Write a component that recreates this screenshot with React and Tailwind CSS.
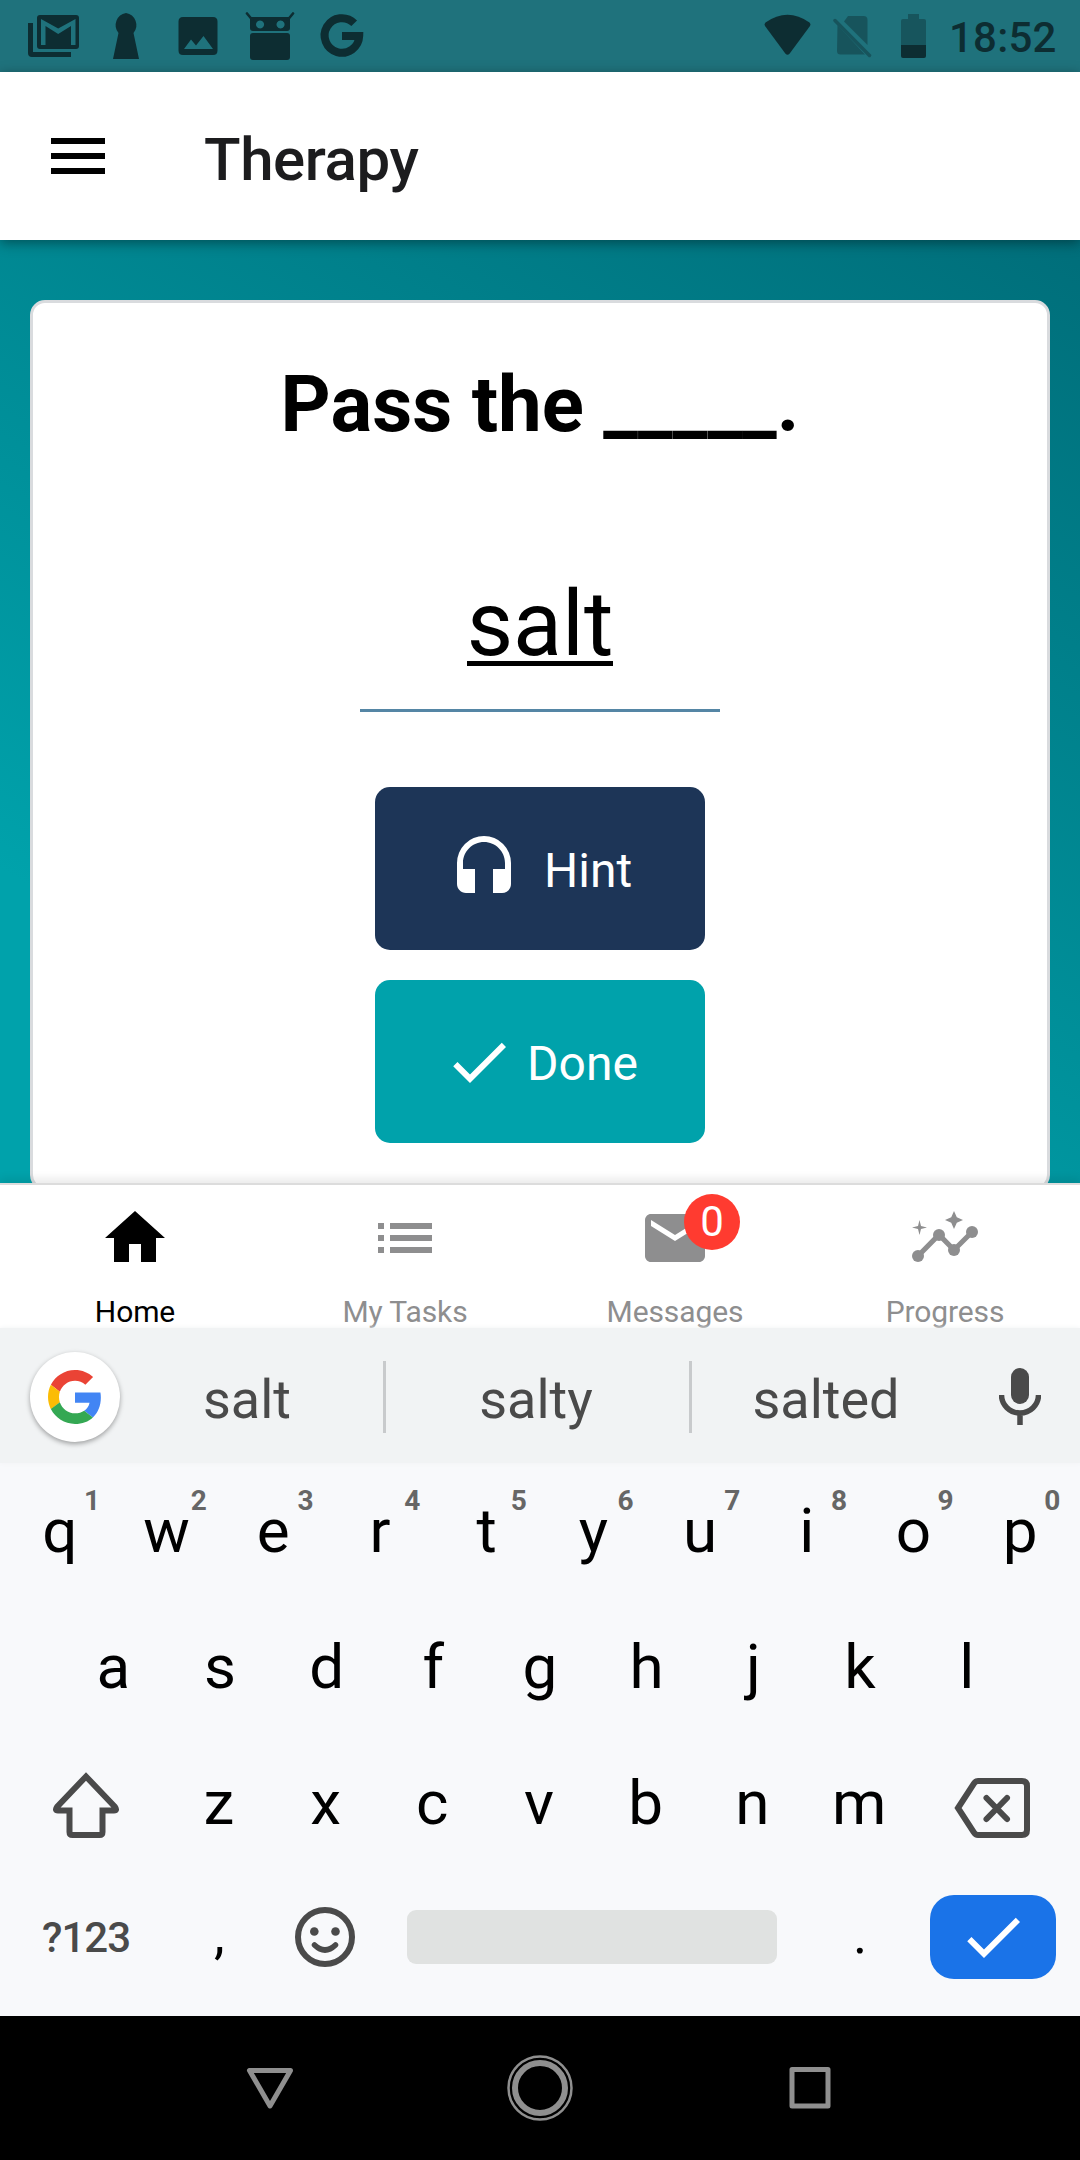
import { MdHeadset, MdCheck, MdHome, MdList, MdMail } from "react-icons/md";

const row1 = "qwertyuiop".split("");
const row2 = "asdfghjkl".split("");
const row3 = "zxcvbnm".split("");

function StatusBar() {
  return (
    <div className="flex h-[72px] items-start justify-between bg-[#1f727c] text-[#0d2d32]">
      <svg className="h-[72px] w-[400px]" viewBox="0 0 400 72" fill="currentColor">
        <path d="M28 23h5v29h38v5H32q-4 0-4-4z" />
        <path fillRule="evenodd" d="M40 15h36q3 0 3 3v28q0 3-3 3H40q-3 0-3-3V18q0-3 3-3zm1 4v26h4.500V26l12.700 8L71 26v19h4.500V19L58.200 28.500z" />
        <path d="M126 13a12.300 12.300 0 0 1 7.500 20L139 59h-26l5.500-26A12.300 12.300 0 0 1 126 13z" />
        <path fillRule="evenodd" d="M183 17h30q4.500 0 4.500 4.500v29q0 4.500-4.500 4.500h-30q-4.500 0-4.500-4.500v-29q0-4.500 4.500-4.500zm1 32h29l-9.500-13-7.500 9.500-5-6z" />
        <path fillRule="evenodd" d="M250 17h40v11q0 3-3 3h-34q-3 0-3-3zm10 3.500a4 4 0 1 0 .1 0zm20.500 0a4 4 0 1 0 .1 0z" />
        <path d="M253 33h34q3 0 3 3v21q0 3-3 3h-34q-3 0-3-3V36q0-3 3-3z" />
        <path d="M247 13.500l5 6M293 13.500l-5 6" stroke="currentColor" strokeWidth="2.600" strokeLinecap="round" />
        <path d="M354.200 23.300A17.300 17.300 0 1 0 359.200 36H342" fill="none" stroke="currentColor" strokeWidth="8" />
      </svg>
      <div className="flex">
        <svg className="h-[72px] w-[180px]" viewBox="0 0 180 72" fill="currentColor">
          <path d="M9.500 22.500Q31.500 7 53.500 22.500q1.800 1.500.5 3.500L33.500 53.800q-2 2-4 0L9 26q-1.300-2 .5-3.500z" />
          <g opacity=".42">
            <path d="M92 16h15.500q4 0 4 4v25L88 21.500zM81.500 25L109 54.500H84.500q-3.500 0-3.500-3.500z" />
            <path d="M79 20.500l34.500 35" stroke="currentColor" strokeWidth="3.500" strokeLinecap="round" />
          </g>
          <path opacity=".42" d="M152 14h11v5h5q2 0 2 2v24h-25V21q0-2 2-2h5z" />
          <path d="M145 45h25v11q0 2-2 2h-21q-2 0-2-2z" />
        </svg>
        <div className="mr-6 ml-[13px] w-[107px] text-right text-[42px] leading-[76px] font-medium tracking-[0.2px]">18:52</div>
      </div>
    </div>
  );
}

function Header() {
  return (
    <div className="relative z-10 flex h-[168px] items-center bg-white pl-[51px] shadow-[0_3px_12px_rgba(0,0,0,0.4)]">
      <div className="flex w-[54px] flex-col gap-[9px]">
        <div className="h-1.5 bg-black" />
        <div className="h-1.5 bg-black" />
        <div className="h-1.5 bg-black" />
      </div>
      <h1 className="ml-[99px] pt-2 text-[60px] leading-[70px] font-medium tracking-[-0.4px] text-[#1c1c1e]">Therapy</h1>
    </div>
  );
}

function Card() {
  return (
    <div className="mx-[30px] mt-[60px] flex h-[890px] flex-col items-center rounded-[15px] border-[3px] border-[#d9dbde] bg-white">
      <h2 className="mt-[55px] text-[78px] leading-[93px] font-bold text-black">Pass the _____.</h2>
      <div className="mt-[121px] flex h-[140px] w-[360px] justify-center border-b-[3px] border-[#5586a5]">
        <div className="h-[94px] border-b-[5px] border-black text-[90px] leading-[106px] text-black">salt</div>
      </div>
      <button className="mt-[75px] flex h-[163px] w-[330px] rounded-[15px] bg-[#1d3557] pt-[46px] pl-[73px] text-white">
        <MdHeadset className="size-[72px]" />
        <span className="ml-6 text-[48px] leading-[76px]">Hint</span>
      </button>
      <button className="mt-[30px] flex h-[163px] w-[330px] rounded-[15px] bg-[#00a2ab] pt-[46px] pl-[68px] text-white">
        <MdCheck className="size-[72px]" />
        <span className="ml-3 text-[48px] leading-[76px]">Done</span>
      </button>
    </div>
  );
}

function InsightsIcon({ className }) {
  return (
    <svg className={className} viewBox="0 0 24 24" fill="currentColor">
      <path d="M15 9l.94-2.070L18 6l-2.060-.93L15 3l-.92 2.070L12 6l2.080.93zM3.500 11L4 9l2-.5L4 8l-.5-2L3 8l-2 .5L3 9z" />
      <path d="M3 18l7-7.100 5 5.100 6-6" fill="none" stroke="currentColor" strokeWidth="1.700" />
      <circle cx="3" cy="18" r="2" />
      <circle cx="10" cy="11" r="2" />
      <circle cx="15" cy="16" r="2" />
      <circle cx="21" cy="10" r="2" />
    </svg>
  );
}

function Tab({ icon: Icon, label, active, badge }) {
  return (
    <div className={active ? "flex flex-1 flex-col items-center text-black" : "flex flex-1 flex-col items-center text-[#8e8e8f]"}>
      <div className="relative mt-[17px]">
        <Icon className="size-[72px]" />
        {badge && (
          <div className="absolute top-[-8px] left-[45px] flex size-14 items-center justify-center rounded-full bg-[#ff3b30] text-[42px] leading-[56px] text-white">
            {badge}
          </div>
        )}
      </div>
      <div className="mt-[20px] text-[30px] leading-[36px] tracking-[-0.1px]">{label}</div>
    </div>
  );
}

function GoogleG() {
  return (
    <svg className="size-[54px]" viewBox="0 0 48 48">
      <path fill="#EA4335" d="M24 9.500c3.540 0 6.710 1.220 9.210 3.600l6.850-6.850C35.900 2.380 30.470 0 24 0 14.620 0 6.510 5.380 2.560 13.220l7.980 6.190C12.430 13.720 17.740 9.500 24 9.500z" />
      <path fill="#4285F4" d="M46.980 24.550c0-1.570-.15-3.090-.38-4.550H24v9.020h12.940c-.58 2.960-2.260 5.480-4.780 7.180l7.730 6c4.510-4.180 7.090-10.360 7.090-17.650z" />
      <path fill="#FBBC05" d="M10.530 28.590c-.48-1.450-.76-2.990-.76-4.590s.27-3.140.76-4.590l-7.980-6.190C.92 16.460 0 20.120 0 24c0 3.880.92 7.540 2.560 10.780l7.970-6.190z" />
      <path fill="#34A853" d="M24 48c6.480 0 11.930-2.130 15.890-5.810l-7.730-6c-2.150 1.450-4.920 2.300-8.160 2.300-6.260 0-11.570-4.220-13.470-9.910l-7.980 6.190C6.510 42.620 14.620 48 24 48z" />
    </svg>
  );
}

function Suggestions() {
  return (
    <div className="relative flex h-[135px] shrink-0 items-center bg-[#f1f3f4] pl-[30px] text-[54px] leading-[64px] text-[#4a4a4a] shadow-[0_0_5px_#f1f3f4]">
      <div className="mt-[3px] flex size-[90px] items-center justify-center rounded-full bg-white shadow-[0_2px_5px_rgba(0,0,0,0.35)]">
        <GoogleG />
      </div>
      <div className="mt-2 ml-[-9px] w-[272px] text-center">salt</div>
      <div className="mt-[3px] h-[72px] w-[3px] bg-[#c8cacc]" />
      <div className="mt-2 w-[303px] pr-[3px] text-center">salty</div>
      <div className="mt-[3px] h-[72px] w-[3px] bg-[#c8cacc]" />
      <div className="mt-2 w-[268px] text-center">salted</div>
      <svg className="ml-[39px] h-[60px] w-[42px]" viewBox="0 0 42 60" fill="none">
        <rect x="12" y="2" width="18" height="36" rx="9" fill="#4a4a4a" />
        <path d="M2.500 29a18.500 18 0 0 0 37 0M21 47v12" stroke="#4a4a4a" strokeWidth="5.500" />
      </svg>
    </div>
  );
}

function Key({ label, hint }) {
  return (
    <div className="relative w-[106.700px] text-center">
      {label}
      {hint && <span className="absolute top-[-10px] left-[77.500px] text-[28px] leading-[32px] font-bold text-[#666]">{hint}</span>}
    </div>
  );
}

function Keyboard() {
  return (
    <div className="flex h-[553px] shrink-0 flex-col bg-[#f8f9fb] px-1.5 pt-8 text-[62px] leading-[72px] text-black">
      <div className="flex h-[136px] shrink-0 justify-center">
        {row1.map((k, i) => (
          <Key key={k} label={k} hint={String((i + 1) % 10)} />
        ))}
      </div>
      <div className="flex h-[136px] shrink-0 justify-center">
        {row2.map((k) => (
          <Key key={k} label={k} />
        ))}
      </div>
      <div className="flex h-[136px] shrink-0 justify-center pr-0.5">
        <div className="flex flex-1 justify-center">
          <svg className="mt-[5px] h-[68px] w-[70px]" viewBox="0 0 70 68" fill="none" stroke="#4a4a4a" strokeWidth="6">
            <path d="M35 4.500L64 35Q66.500 38.500 63 38.500H51.500V60q0 3-3 3h-27q-3 0-3-3V38.500H7Q3.500 38.500 6 35z" />
          </svg>
        </div>
        {row3.map((k) => (
          <Key key={k} label={k} />
        ))}
        <div className="flex flex-1 justify-center">
          <svg className="mt-[11px] h-[60px] w-[76px]" viewBox="0 0 76 60" fill="none" stroke="#4a4a4a" strokeWidth="6">
            <path d="M4 30L20 5.500Q21.500 3 24 3h44q5 0 5 5v44q0 5-5 5H24q-2.500 0-4-2.500z" />
            <path d="M32.500 20l20.500 21M53 20L32.500 41" strokeLinecap="round" />
          </svg>
        </div>
      </div>
      <div className="flex h-[113px] shrink-0 items-start">
        <div className="w-[160px] pt-[10px] text-center text-[42px] leading-[50px] font-medium tracking-[-1px] text-[#4a4a4a]">?123</div>
        <div className="w-[106.500px] text-center text-[54px] leading-[64px]">,</div>
        <div className="flex w-[106px] justify-center pt-1 pr-[2px]">
          <svg className="size-[60px]" viewBox="0 0 60 60" fill="none" stroke="#4a4a4a" strokeWidth="6">
            <circle cx="30" cy="30" r="27" />
            <circle cx="19.300" cy="24.500" r="4.300" fill="#4a4a4a" stroke="none" />
            <circle cx="40.500" cy="24.500" r="4.300" fill="#4a4a4a" stroke="none" />
            <path d="M19.500 38q10.500 10 21 0" strokeWidth="5.500" strokeLinecap="round" />
          </svg>
        </div>
        <div className="mt-[7px] ml-[28.500px] h-[54px] w-[370px] rounded-[9px] bg-[#e0e2e1]" />
        <div className="ml-[30px] w-[106px] text-center text-[54px] leading-[64px]">.</div>
        <div className="mt-[-8px] ml-[17px] flex h-[84px] w-[126px] items-center justify-center rounded-[24px] bg-[#1a73e8] text-white">
          <MdCheck className="size-[72px]" />
        </div>
      </div>
    </div>
  );
}

function SystemNav() {
  return (
    <div className="flex h-36 shrink-0 items-center justify-center gap-[204px] bg-black">
      <svg className="size-[66px]" viewBox="0 0 66 66" fill="none" stroke="#8f8f8f" strokeWidth="5" strokeLinejoin="round">
        <path d="M12.500 15.500h41L33 51z" />
      </svg>
      <svg className="size-[66px]" viewBox="0 0 66 66" fill="none" stroke="#8f8f8f">
        <circle cx="33" cy="33" r="31.500" strokeWidth="2.500" />
        <circle cx="33" cy="33" r="25" strokeWidth="6" />
      </svg>
      <svg className="size-[66px]" viewBox="0 0 66 66" fill="none" stroke="#8f8f8f" strokeWidth="5" strokeLinejoin="round">
        <path d="M15 14.500h36v36.500H15z" />
      </svg>
    </div>
  );
}

export default function App() {
  return (
    <div className="flex h-[2160px] w-[1080px] flex-col overflow-hidden bg-white font-[Roboto,sans-serif]">
      <StatusBar />
      <Header />
      <div className="h-[943px] shrink-0 overflow-hidden bg-linear-[210deg,#006e7a_0%,#00a2ab_80%]">
        <Card />
      </div>
      <div className="relative flex h-[145px] shrink-0 border-t-2 border-[#dcdcdc] bg-white shadow-[0_-5px_8px_rgba(0,0,0,0.08)]">
        <Tab icon={MdHome} label="Home" active />
        <Tab icon={MdList} label="My Tasks" />
        <Tab icon={MdMail} label="Messages" badge="0" />
        <Tab icon={InsightsIcon} label="Progress" />
      </div>
      <Suggestions />
      <Keyboard />
      <SystemNav />
    </div>
  );
}
